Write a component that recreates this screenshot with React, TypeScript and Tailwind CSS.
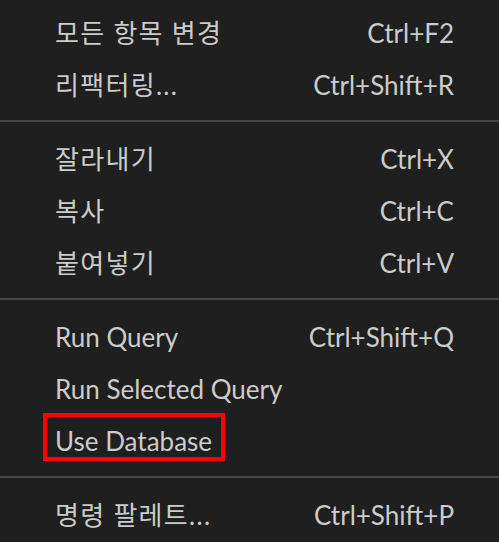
type Item = { label: string; keys?: string; marked?: boolean }

const groups: Item[][] = [
  [
    { label: '모든 항목 변경', keys: 'Ctrl+F2' },
    { label: '리팩터링...', keys: 'Ctrl+Shift+R' },
  ],
  [
    { label: '잘라내기', keys: 'Ctrl+X' },
    { label: '복사', keys: 'Ctrl+C' },
    { label: '붙여넣기', keys: 'Ctrl+V' },
  ],
  [
    { label: 'Run Query', keys: 'Ctrl+Shift+Q' },
    { label: 'Run Selected Query' },
    { label: 'Use Database', marked: true },
  ],
  [{ label: '명령 팔레트...', keys: 'Ctrl+Shift+P' }],
]

const hangul = /[가-힣]/

function MenuRow({ item }: { item: Item }) {
  return (
    <div className="flex h-[52px] items-center justify-between pl-[55px] pr-[45px]">
      <span
        className={
          'relative flex h-full items-center whitespace-nowrap' +
          (hangul.test(item.label) ? ' tracking-[1.3px]' : '')
        }
      >
        {item.label}
        {item.marked && (
          <span className="absolute -left-[12px] -right-[13px] top-[-2px] h-[48px] border-4 border-[#ff0000]" />
        )}
      </span>
      {item.keys && <span className="whitespace-nowrap">{item.keys}</span>}
    </div>
  )
}

export default function App() {
  return (
    <div className="h-[542px] w-[499px] overflow-hidden bg-[#1f1f1f] pt-[7px] font-['Lato','Noto_Sans_CJK_KR',sans-serif] text-[26px] leading-none text-[#cccccc]">
      {groups.map((group, gi) => (
        <div key={gi}>
          {gi > 0 && (
            <div className="pb-[11px] pt-[9px]">
              <div className="h-[2px] bg-[#454545]" />
            </div>
          )}
          {group.map((item) => (
            <MenuRow key={item.label} item={item} />
          ))}
        </div>
      ))}
    </div>
  )
}
